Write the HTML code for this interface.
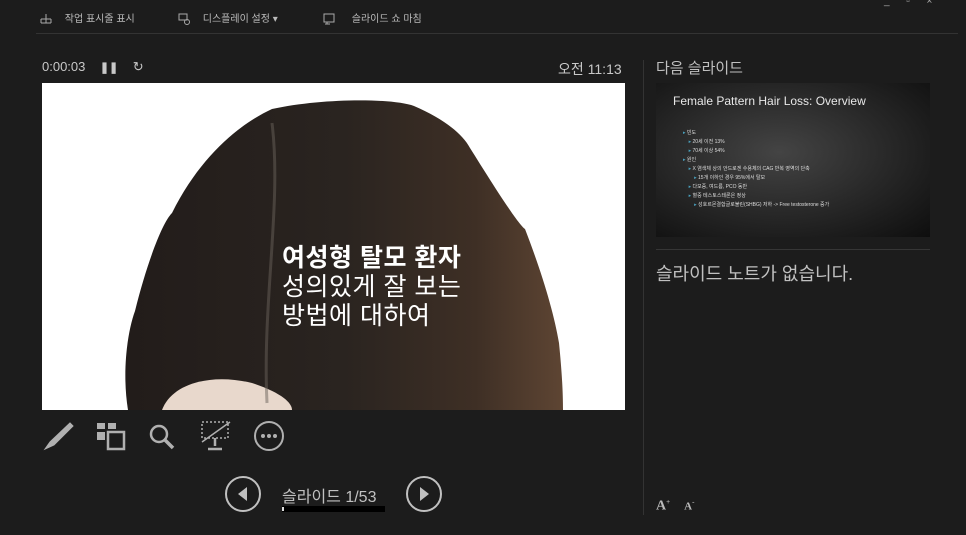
<!DOCTYPE html>
<html><head><meta charset="utf-8"><style>
*{margin:0;padding:0;box-sizing:border-box}
body{width:966px;height:535px;background:#1c1c1c;overflow:hidden;position:relative;font-family:"Liberation Sans","Noto Sans CJK KR",sans-serif;color:#c8c8c8}
.a{position:absolute;white-space:nowrap}
</style></head><body>
<div class="a" style="left:40px;top:10px;font-size:10px;color:#bbb">
<svg width="12" height="10" style="vertical-align:middle"><path d="M6 0v5M1 5h10M1 9h10M1 5v4M6 5v4M11 5v4" stroke="#aaa" fill="none"/></svg>
<span style="margin-left:10px">작업 표시줄 표시</span></div>
<div class="a" style="left:178px;top:10px;font-size:10px;color:#bbb">
<svg width="12" height="12" style="vertical-align:middle"><rect x="1" y="1" width="8" height="6" stroke="#aaa" fill="none"/><circle cx="9" cy="9" r="2.5" stroke="#aaa" fill="none"/></svg>
<span style="margin-left:10px">디스플레이 설정 ▾</span></div>
<div class="a" style="left:323px;top:10px;font-size:10px;color:#bbb">
<svg width="12" height="12" style="vertical-align:middle"><rect x="1" y="1" width="10" height="8" stroke="#aaa" fill="none"/><path d="M4 9v2M2 11h5" stroke="#aaa"/></svg>
<span style="margin-left:14px">슬라이드 쇼 마침</span></div>
<div class="a" style="left:884px;top:-4px;font-size:10px;color:#aaa">_&nbsp;&nbsp;&nbsp;&nbsp;&nbsp;&nbsp;▫&nbsp;&nbsp;&nbsp;&nbsp;&nbsp;&nbsp;×</div>
<div class="a" style="left:36px;top:33px;width:922px;height:1px;background:#333"></div>

<div class="a" style="left:42px;top:59px;font-size:13px;color:#c8c8c8">0:00:03 &nbsp;&nbsp;&nbsp;<b style="font-size:11px">❚❚</b>&nbsp;&nbsp;&nbsp;&nbsp;↻</div>
<div class="a" style="left:558px;top:59px;font-size:14px;color:#c8c8c8">오전 11:13</div>

<svg class="a" style="left:42px;top:83px" width="583" height="327" viewBox="0 0 583 327">
<defs><linearGradient id="h" x1="0" x2="1" y1="0" y2="0"><stop offset="0" stop-color="#221c1a"/><stop offset=".5" stop-color="#2a2420"/><stop offset=".8" stop-color="#3e2f25"/><stop offset="1" stop-color="#5e4533"/></linearGradient></defs>
<rect width="583" height="327" fill="#fff"/>
<path d="M86 327 C80 290 85 250 93 228 C105 180 120 140 130 130 C160 70 200 40 230 26 C280 15 350 15 372 23 C400 35 420 50 428 65 C450 100 475 140 483 146 C500 190 512 230 517 260 C520 290 521 310 521 327Z" fill="url(#h)"/>
<path d="M120 327 C130 300 170 290 210 300 C240 310 250 320 250 327Z" fill="#e8d8cc"/>
<path d="M230 40 C240 120 220 220 225 320" stroke="#6a625a" stroke-width="3" fill="none" opacity=".5"/>
<g font-family="Liberation Sans,Noto Sans CJK KR,sans-serif" fill="#fff" font-size="25" letter-spacing="0.5">
<text x="240" y="183" font-weight="bold">여성형 탈모 환자</text>
<text x="240" y="212">성의있게 잘 보는</text>
<text x="240" y="241">방법에 대하여</text></g>
</svg>

<svg class="a" style="left:42px;top:420px" width="250" height="34" viewBox="0 0 250 34">
<g stroke="#b0b0b0" fill="none" stroke-width="2.5">
<path d="M3 29 L8 22 L28 3 L31 6 L12 25 Z" fill="#b0b0b0" stroke-width="1"/>
<rect x="55" y="3" width="8" height="6" fill="#b0b0b0" stroke="none"/><rect x="66" y="3" width="8" height="6" fill="#b0b0b0" stroke="none"/><rect x="55" y="12" width="8" height="8" fill="#b0b0b0" stroke="none"/>
<rect x="66" y="12" width="16" height="17"/>
<circle cx="117" cy="14" r="8"/><path d="M123 20 L131 28" stroke-width="3.5"/>
<path d="M160 2h26v16h-26z" stroke-dasharray="2 2" stroke-width="1.5"/><path d="M160 22 L188 2" stroke-width="1.5"/><path d="M173 18v8M166 29h14" stroke-width="2.5"/>
<circle cx="227" cy="16" r="14" stroke-width="2"/>
</g>
<g fill="#b0b0b0"><circle cx="221" cy="16" r="2"/><circle cx="227" cy="16" r="2"/><circle cx="233" cy="16" r="2"/></g>
</svg>

<svg class="a" style="left:224px;top:475px" width="40" height="38"><circle cx="19" cy="19" r="17" stroke="#c0c0c0" stroke-width="2" fill="none"/><path d="M23 12 L14 19 L23 26Z" fill="#c0c0c0"/></svg>
<div class="a" style="left:282px;top:483px;font-size:16px;color:#c0c0c0">슬라이드 1/53</div>
<div class="a" style="left:282px;top:506px;width:103px;height:6px;background:#000"></div>
<div class="a" style="left:282px;top:507px;width:2px;height:4px;background:#ddd"></div>
<svg class="a" style="left:404px;top:475px" width="40" height="38"><circle cx="20" cy="19" r="17" stroke="#c0c0c0" stroke-width="2" fill="none"/><path d="M16 12 L25 19 L16 26Z" fill="#c0c0c0"/></svg>

<div class="a" style="left:643px;top:60px;width:1px;height:455px;background:#333"></div>
<div class="a" style="left:656px;top:57px;font-size:15px;color:#c0c0c0">다음 슬라이드</div>
<div class="a" style="left:656px;top:83px;width:274px;height:154px;background:radial-gradient(ellipse at 45% 45%,#444 0%,#262626 55%,#0e0e0e 100%)">
<div class="a" style="left:17px;top:11px;font-size:12px;color:#e8e8e8">Female Pattern Hair Loss: Overview</div>
<div class="a" style="left:27px;top:46px;font-size:5px;line-height:9px;color:#ddd">
<span style="color:#4aa3c0">▸</span> 빈도<br>&nbsp;&nbsp;&nbsp;&nbsp;<span style="color:#4aa3c0">▸</span> 20세 이전 13%<br>&nbsp;&nbsp;&nbsp;&nbsp;<span style="color:#4aa3c0">▸</span> 70세 이상 54%<br><span style="color:#4aa3c0">▸</span> 원인<br>&nbsp;&nbsp;&nbsp;&nbsp;<span style="color:#4aa3c0">▸</span> X 염색체 상의 안드로겐 수용체의 CAG 반복 영역의 단축<br>&nbsp;&nbsp;&nbsp;&nbsp;&nbsp;&nbsp;&nbsp;&nbsp;<span style="color:#4aa3c0">▸</span> 15개 이하인 경우 95%에서 탈모<br>&nbsp;&nbsp;&nbsp;&nbsp;<span style="color:#4aa3c0">▸</span> 다모증, 여드름, PCO 동반<br>&nbsp;&nbsp;&nbsp;&nbsp;<span style="color:#4aa3c0">▸</span> 혈중 테스토스테론은 정상<br>&nbsp;&nbsp;&nbsp;&nbsp;&nbsp;&nbsp;&nbsp;&nbsp;<span style="color:#4aa3c0">▸</span> 성호르몬결합글로불린(SHBG) 저하 -&gt; Free testosterone 증가</div>
</div>
<div class="a" style="left:656px;top:249px;width:274px;height:1px;background:#363636"></div>
<div class="a" style="left:656px;top:260px;font-size:18px;color:#c0c0c0">슬라이드 노트가 없습니다.</div>
<div class="a" style="left:656px;top:498px;font-size:14px;font-family:'Liberation Serif',serif;font-weight:bold;color:#bbb">A<sup style="font-size:7px">+</sup>&nbsp;&nbsp;&nbsp;&nbsp;<span style="font-size:11px">A</span><sup style="font-size:7px">-</sup></div>
</body></html>
